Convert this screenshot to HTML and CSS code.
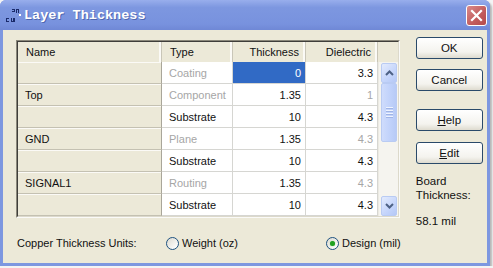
FILE: index.html
```html
<!DOCTYPE html>
<html>
<head>
<meta charset="utf-8">
<title>Layer Thickness</title>
<link rel="stylesheet" href="styles.css">
</head>
<body>
<div class="window">
  <div class="titlebar">
    <svg class="appicon" width="16" height="16" viewBox="0 0 16 16">
      <rect x="7" y="1" width="3" height="1" fill="#1a2a6a"/>
      <rect x="9" y="2" width="1" height="2" fill="#1a2a6a"/>
      <rect x="7" y="3" width="2" height="1" fill="#1a2a6a"/>
      <rect x="11" y="1" width="3" height="1" fill="#1a2a6a"/>
      <rect x="11" y="2" width="1" height="3" fill="#1a2a6a"/>
      <rect x="13" y="2" width="1" height="3" fill="#1a2a6a"/>
      <rect x="14" y="6" width="2" height="2" fill="#ffffff"/>
      <rect x="1" y="10" width="3" height="1" fill="#1a2a6a"/>
      <rect x="1" y="11" width="1" height="2" fill="#1a2a6a"/>
      <rect x="1" y="13" width="3" height="1" fill="#1a2a6a"/>
      <rect x="6" y="10" width="1" height="4" fill="#1a2a6a"/>
      <rect x="9" y="10" width="1" height="4" fill="#1a2a6a"/>
      <rect x="6" y="13" width="4" height="1" fill="#1a2a6a"/>
      <rect x="8" y="10" width="1" height="3" fill="#1a2a6a"/>
    </svg>
    <span class="title">Layer Thickness</span>
    <div class="close">
      <svg width="21" height="21" viewBox="0 0 21 21">
        <path d="M6 6 L15 15 M15 6 L6 15" stroke="#fff" stroke-width="2.2" stroke-linecap="square"/>
      </svg>
    </div>
  </div>
  <div class="client">
    <div class="main">
      <div class="frame">
        <div class="frame-in">
          <div class="grid">
            <div class="hd">Name</div>
            <div class="hd">Type</div>
            <div class="hd num">Thickness</div>
            <div class="hd num">Dielectric</div>
            <div class="hd hd-end"></div>

            <div class="nm"></div>
            <div class="c dim">Coating</div>
            <div class="c num sel">0</div>
            <div class="c num">3.3</div>

            <div class="nm">Top</div>
            <div class="c dim">Component</div>
            <div class="c num">1.35</div>
            <div class="c num dim">1</div>

            <div class="nm"></div>
            <div class="c">Substrate</div>
            <div class="c num">10</div>
            <div class="c num">4.3</div>

            <div class="nm">GND</div>
            <div class="c dim">Plane</div>
            <div class="c num">1.35</div>
            <div class="c num dim">4.3</div>

            <div class="nm"></div>
            <div class="c">Substrate</div>
            <div class="c num">10</div>
            <div class="c num">4.3</div>

            <div class="nm">SIGNAL1</div>
            <div class="c dim">Routing</div>
            <div class="c num">1.35</div>
            <div class="c num dim">4.3</div>

            <div class="nm"></div>
            <div class="c">Substrate</div>
            <div class="c num">10</div>
            <div class="c num">4.3</div>

            <div class="scroll">
              <div class="sbtn">
                <svg width="9" height="6" viewBox="0 0 9 6"><path d="M1 5 L4.5 1.5 L8 5" fill="none" stroke="#4d6185" stroke-width="2"/></svg>
              </div>
              <div class="thumb">
                <span class="grip"></span><span class="grip"></span><span class="grip"></span><span class="grip"></span>
              </div>
              <div class="track"></div>
              <div class="sbtn">
                <svg width="9" height="6" viewBox="0 0 9 6"><path d="M1 1 L4.5 4.5 L8 1" fill="none" stroke="#4d6185" stroke-width="2"/></svg>
              </div>
            </div>
          </div>
        </div>
      </div>
      <div class="units">
        <span class="units-label">Copper Thickness Units:</span>
        <label class="radio"><span class="dot"></span>Weight (oz)</label>
        <label class="radio on"><span class="dot"></span>Design (mil)</label>
      </div>
    </div>
    <div class="side">
      <div class="btn">OK</div>
      <div class="btn gap1">Cancel</div>
      <div class="btn gap2"><u>H</u>elp</div>
      <div class="btn gap3"><u>E</u>dit</div>
      <div class="board">Board<br>Thickness:</div>
      <div class="board-val">58.1 mil</div>
    </div>
  </div>
</div>
</body>
</html>
```

FILE: styles.css
```css
* { box-sizing: border-box; }
html, body { margin: 0; padding: 0; }
body {
  background: #f4f4f4;
  font-family: "Liberation Sans", Arial, sans-serif;
  font-size: 11px;
  color: #111;
}
.window {
  width: 490px;
  height: 266px;
  display: flex;
  flex-direction: column;
  background: #7d97e0;
  border-radius: 6px 6px 0 0;
  box-shadow: 2px 2px 2px rgba(0,0,0,0.25);
}
.titlebar {
  height: 30px;
  display: flex;
  align-items: center;
  padding-left: 5px;
  background: linear-gradient(#98aeec 0%, #7d97e0 25%, #7892de 80%, #6f88d6 100%);
  border-radius: 6px 6px 0 0;
}
.appicon { flex: none; margin-top: 1px; }
.title {
  margin-left: 3px;
  font-family: "Liberation Mono", "Courier New", monospace;
  font-weight: bold;
  font-size: 13.5px;
  color: #fff;
  text-shadow: 1px 1px 0 rgba(40,60,130,0.5);
  letter-spacing: 0;
  flex: 1;
  padding-top: 1px;
}
.close {
  width: 21px;
  height: 21px;
  margin-right: 3px;
  border: 1px solid #fff;
  border-radius: 3px;
  background: linear-gradient(135deg, #d98a8a, #c25b5b 60%, #b54a4a);
  display: flex;
  align-items: center;
  justify-content: center;
}
.close svg { display: block; margin: -1px; }
.client {
  flex: 1;
  margin: 0 3px 3px 3px;
  background: #ece9d8;
  display: flex;
  padding: 7px 0 0 13px;
}
.main { margin-top: 3px; display: flex; flex-direction: column; }
.frame {
  width: 384px;
  border: 1px solid;
  border-color: #8a877a #fafaf8 #fafaf8 #8a877a;
}
.frame-in {
  border: 1px solid;
  border-color: #3f3e3a #dcd9cb #dcd9cb #3f3e3a;
}
.grid {
  display: grid;
  grid-template-columns: 144px 71px 73px 72px 20px;
  grid-template-rows: 20px repeat(7, 22px);
  background: #fff;
}
.hd {
  background: #ece9d8;
  padding: 0 8px;
  display: flex;
  align-items: center;
  border-right: 1px solid #c9c6b8;
  box-shadow: inset -2px 0 0 #fbfaf6;
  color: #111;
}
.hd.num { justify-content: flex-end; padding-right: 6px; }
.hd-end { border-right: none; box-shadow: none; }
.nm {
  background: #ece9d8;
  border-bottom: 1px solid #c4c1b2;
  border-right: 1px solid #a9a69a;
  box-shadow: inset 0 1px 0 #fbfaf6;
  padding-left: 7px;
  display: flex;
  align-items: center;
}
.c {
  border-right: 1px solid #d6d6d2;
  border-bottom: 1px solid #d6d6d2;
  padding: 0 7px;
  display: flex;
  align-items: center;
  background: #fff;
}
.c.num { justify-content: flex-end; padding-right: 4px; }
.dim { color: #a6a6a6; }
.sel { background: #316ac5; color: #fff; }
.scroll {
  grid-column: 5;
  grid-row: 2 / 9;
  background: #f5f4ef;
  border-left: 1px solid #eceae2;
  padding: 1px 1px 0 2px;
  display: flex;
  flex-direction: column;
}
.sbtn {
  height: 20px;
  flex: none;
  border: 1px solid #b9cbf3;
  border-radius: 2px;
  background: linear-gradient(135deg, #e3ebfd, #c5d5fb 60%, #b5c8f6);
  display: flex;
  align-items: center;
  justify-content: center;
}
.thumb {
  height: 59px;
  flex: none;
  border: 1px solid #b9cbf3;
  border-radius: 2px;
  background: linear-gradient(90deg, #cfdcfc, #c2d3fb 50%, #b7caf6);
  display: flex;
  flex-direction: column;
  align-items: center;
  justify-content: center;
  gap: 1px;
}
.grip { width: 7px; height: 1px; background: #eef3fe; box-shadow: 0 1px 0 #9fb4e6; margin-bottom: 1px; }
.track { flex: 1; }
.units {
  display: flex;
  align-items: center;
  height: 20px;
  margin-top: 15px;
  padding-left: 1px;
}
.units-label { width: 149px; }
.radio {
  display: flex;
  align-items: center;
  gap: 3px;
}
.radio + .radio { margin-left: 88px; }
.dot {
  width: 13px;
  height: 13px;
  border-radius: 50%;
  border: 1px solid #1c5180;
  background: linear-gradient(135deg, #dcdad0, #fbfbf9 80%);
  display: flex;
  align-items: center;
  justify-content: center;
}
.radio.on .dot::after {
  content: "";
  width: 5px;
  height: 5px;
  border-radius: 50%;
  background: #21a121;
  box-shadow: 0 0 1px #5fd35f;
}
.side {
  margin-left: 15px;
  width: 67px;
  display: flex;
  flex-direction: column;
}
.btn {
  height: 22px;
  border: 1px solid #2a4a6a;
  border-radius: 3px;
  background: linear-gradient(#ffffff, #f4f3ee 70%, #dedbcf);
  display: flex;
  align-items: center;
  justify-content: center;
  font-size: 11.5px;
}
.gap1 { margin-top: 10px; }
.gap2 { margin-top: 18px; }
.gap3 { margin-top: 11px; }
.board { margin-top: 10px; line-height: 14px; font-size: 11.5px; }
.board-val { margin-top: 12px; line-height: 14px; font-size: 11.5px; }
```
